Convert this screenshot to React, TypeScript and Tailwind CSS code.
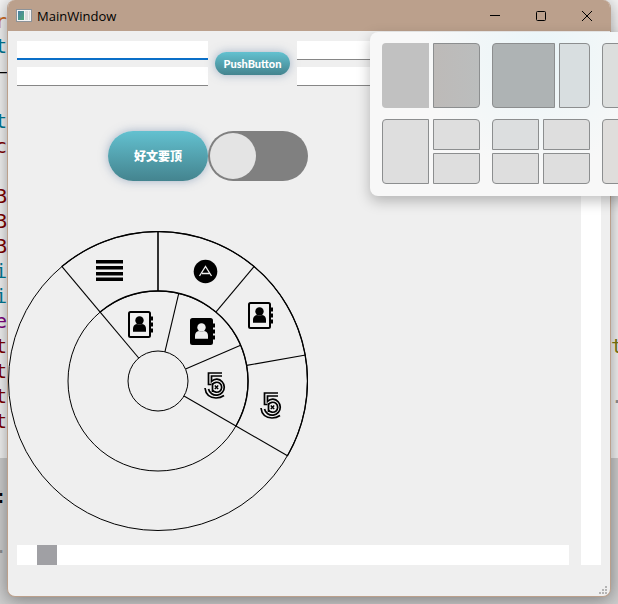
import type { ReactNode } from "react";

type CodeLine = { text: string; tone: string };

const BLANK: CodeLine = { text: "", tone: "" };
const TEAL = "text-[#007a96]";
const MAROON = "text-[#800000]";

const leftCode: CodeLine[] = [
  { text: "r", tone: "text-[#d06a20]" },
  { text: "t", tone: TEAL },
  { text: "—", tone: "text-black" },
  BLANK,
  { text: "t", tone: TEAL },
  { text: "c", tone: MAROON },
  BLANK,
  { text: "B", tone: MAROON },
  { text: "B", tone: MAROON },
  { text: "B", tone: MAROON },
  { text: "i", tone: TEAL },
  { text: "i", tone: TEAL },
  { text: "e", tone: "text-[#800080]" },
  { text: "t", tone: MAROON },
  { text: "t", tone: MAROON },
  { text: "t", tone: MAROON },
  { text: "t", tone: MAROON },
  BLANK,
  BLANK,
  { text: ":", tone: "text-black" },
  BLANK,
  { text: ".", tone: "text-[#909090]" },
];

const rightCode: CodeLine[] = [
  ...Array.from({ length: 13 }, () => BLANK),
  { text: "t", tone: "text-[#7d7a10]" },
  BLANK,
  { text: ".", tone: "text-[#909090]" },
];

function CodeStrip({ lines, align }: { lines: CodeLine[]; align: string }) {
  return (
    <div className={"flex w-[7px] flex-col overflow-hidden pt-[9px] " + align}>
      {lines.map((line, i) => (
        <span key={i} className={"h-[25px] shrink-0 text-xl leading-[25px] " + line.tone}>
          {line.text}
        </span>
      ))}
    </div>
  );
}

function Editor() {
  return (
    <div className="absolute inset-0 flex flex-col bg-[#f5f5f5]" aria-hidden="true">
      <div className="h-[458px] bg-[#f5f5f5]" />
      <div className="flex-1 bg-[#cecece]" />
      <div className="absolute inset-0 flex justify-between font-['DejaVu_Sans_Mono',monospace]">
        <CodeStrip lines={leftCode} align="items-end" />
        <CodeStrip lines={rightCode} align="items-start" />
      </div>
    </div>
  );
}

function TitleBar() {
  return (
    <header className="flex h-[31px] items-center bg-[#bba08c] pl-2">
      <svg width="16" height="13" viewBox="0 0 16 13" aria-hidden="true">
        <defs>
          <linearGradient id="pane" x1="0" y1="0" x2="1" y2="1">
            <stop offset="0" stopColor="#4a7fa5" />
            <stop offset="1" stopColor="#4fa878" />
          </linearGradient>
        </defs>
        <rect x="0.5" y="0.5" width="15" height="12" fill="#f4f4f4" stroke="#8d9399" />
        <rect x="2" y="2" width="6" height="9" fill="url(#pane)" />
        <rect x="9" y="2" width="3" height="9" fill="#dedede" />
        <rect x="13" y="2" width="1" height="9" fill="#dedede" />
      </svg>
      <h1 className="ml-[5px] flex-1 font-['Open_Sans',sans-serif] text-[13px] leading-4 text-black">MainWindow</h1>
      <button type="button" aria-label="Minimize" className="flex h-full w-[46px] items-center justify-center">
        <svg width="10" height="10" viewBox="0 0 10 10" stroke="#000" fill="none">
          <path d="M0 4.500H10" />
        </svg>
      </button>
      <button type="button" aria-label="Maximize" className="flex h-full w-[46px] items-center justify-center">
        <svg width="10" height="10" viewBox="0 0 10 10" stroke="#000" fill="none">
          <rect x="0.5" y="0.5" width="9" height="9" rx="1" />
        </svg>
      </button>
      <button type="button" aria-label="Close" className="flex h-full w-[46px] items-center justify-center">
        <svg width="10" height="10" viewBox="0 0 10 10" stroke="#000" fill="none">
          <path d="M0 0L10 10M10 0L0 10" />
        </svg>
      </button>
    </header>
  );
}

function Field({ label, active = false }: { label: string; active?: boolean }) {
  return (
    <input
      type="text"
      aria-label={label}
      className={
        "block h-[19px] w-full bg-white px-1 text-xs outline-none " +
        (active ? "border-b-2 border-[#0a6fc8]" : "border-b border-[#868686]")
      }
    />
  );
}

const pill =
  "bg-linear-to-b from-[#63c1d0] to-[#44848f] font-black text-white shadow-[0_0_10px_rgba(90,120,160,0.5)]";

function Book({ x, y, filled = false }: { x: number; y: number; filled?: boolean }) {
  const person = filled ? "#efefef" : "#000";
  return (
    <g transform={`translate(${x} ${y})`}>
      <rect x="1" y="1" width="21" height="25" rx="1.5" fill={filled ? "#000" : "none"} stroke="#000" strokeWidth="2" />
      <path d="M22 5.5h3v4h-3zM22 11.500h3v4h-3zM22 17.500h3v4h-3z" fill="#000" />
      <circle cx="11.500" cy="9.500" r="4.200" fill={person} />
      <path d="M5 20.800v-3q0-4 4-4.800q2.500 1.500 5 0q4 .8 4 4.800v3z" fill={person} />
    </g>
  );
}

function Five({ x, y }: { x: number; y: number }) {
  return (
    <g transform={`translate(${x} ${y})`} fill="none" stroke="#000" strokeWidth="1.7">
      <path d="M18 1H4.500V12.500H7.500" />
      <path d="M18 4H7.500V9.500Q10 7 13 7.200A8 8 0 1 1 4.500 17" />
      <path d="M8.500 11V20M8.500 12.500A5 5 0 1 1 8.500 18" />
      <path d="M10.800 13.500l3.400 3.400M14.200 13.500l-3.400 3.400" strokeWidth="1.4" />
      <path d="M1 16Q2 25.500 12 26Q16.500 26 20 23.500" />
    </g>
  );
}

const CENTER = 150;

function spoke(angle: number, from: number, to: number) {
  const rad = (angle * Math.PI) / 180;
  const cos = Math.cos(rad);
  const sin = -Math.sin(rad);
  return `M${CENTER + from * cos} ${CENTER + from * sin}L${CENTER + to * cos} ${CENTER + to * sin}`;
}

function RadialMenu() {
  const outer = [130, 90, 50, 10, -30];
  const inner = [130, 76.67, 23.33, -30];
  return (
    <svg width="300" height="300" viewBox="0 0 300 300" role="img" aria-label="Radial menu" className="mt-[50px] block">
      <g fill="none" stroke="#000">
        <circle cx="150" cy="150" r="149.5" />
        <circle cx="150" cy="150" r="90" />
        <circle cx="150" cy="150" r="30" />
        {outer.map((a) => (
          <path key={a} d={spoke(a, 90, 150)} strokeWidth={a === 90 ? 1.6 : 1.1} />
        ))}
        {inner.map((a) => (
          <path key={a} d={spoke(a, 30, 90)} strokeWidth="1.1" />
        ))}
        <path d="M92.150 81.060A90 90 0 0 1 227.940 195" strokeWidth="1.4" />
        <path d="M53.900 35.500A149.500 149.500 0 0 1 279.500 224.700" strokeWidth="1.3" />
      </g>
      <path d="M88 29h27v3.500H88zM88 35h27v3.500H88zM88 41h27v3.500H88zM88 46.500h27V50H88z" />
      <circle cx="197.500" cy="40.500" r="11.800" />
      <path d="M191.500 45l6-9.500l6 9.500M194 42.500h7.500" fill="none" stroke="#efefef" strokeWidth="1.3" />
      <Book x={120} y={80} />
      <Book x={182} y={87} filled />
      <Book x={240} y={71} />
      <Five x={196} y={141} />
      <Five x={252} y={161} />
    </svg>
  );
}

const zoneBase = "border border-[#8c8e8f] ";

function Zone({ label, look }: { label: string; look: string }) {
  return <button type="button" aria-label={label} className={zoneBase + look} />;
}

function Layout({ cols, children }: { cols: string; children: ReactNode }) {
  return <div className={"grid h-[65px] w-[98px] shrink-0 gap-x-1 gap-y-[3px] " + cols}>{children}</div>;
}

function SnapLayouts() {
  return (
    <aside
      aria-label="Snap layouts"
      className="absolute top-8 left-[370px] right-[-120px] flex flex-col gap-[11px] rounded-lg bg-[#f8f8f8] bg-[radial-gradient(circle_at_170px_20px,#eaf5f8_0px,#f8f8f8_120px)] px-3 pt-[11px] pb-3 shadow-[0_5px_14px_rgba(0,0,0,0.25)]"
    >
      <div className="flex gap-3">
        <Layout cols="grid-cols-2">
          <button type="button" aria-label="Left half" className="rounded-l bg-[#c1c1c1]" />
          <Zone label="Right half" look="rounded-r bg-linear-to-r from-[#bdbab8] to-[#bbbdbd]" />
        </Layout>
        <Layout cols="grid-cols-[2fr_1fr]">
          <Zone label="Left two thirds" look="rounded-l bg-[#aeb3b4]" />
          <Zone label="Right third" look="rounded-r bg-[#d8dee0]" />
        </Layout>
        <Layout cols="grid-cols-3">
          <Zone label="First third" look="rounded-l bg-[#dcdedd]" />
          <Zone label="Second third" look="bg-[#dcdedd]" />
          <Zone label="Last third" look="rounded-r bg-[#dcdedd]" />
        </Layout>
      </div>
      <div className="flex gap-3">
        <Layout cols="grid-cols-2 grid-rows-2">
          <Zone label="Left half of three" look="row-span-2 rounded-l bg-[#dedede]" />
          <Zone label="Top right" look="rounded-tr bg-[#dedede]" />
          <Zone label="Bottom right" look="rounded-br bg-[#dedede]" />
        </Layout>
        <Layout cols="grid-cols-2 grid-rows-2">
          <Zone label="Top left quarter" look="rounded-tl bg-[#dcdedf]" />
          <Zone label="Top right quarter" look="rounded-tr bg-[#dedede]" />
          <Zone label="Bottom left quarter" look="rounded-bl bg-[#dedede]" />
          <Zone label="Bottom right quarter" look="rounded-br bg-[#dedede]" />
        </Layout>
        <Layout cols="grid-cols-[1fr_2fr_1fr]">
          <Zone label="Narrow left" look="rounded-l bg-[#dfdddb]" />
          <Zone label="Wide center" look="bg-[#dedede]" />
          <Zone label="Narrow right" look="rounded-r bg-[#dedede]" />
        </Layout>
      </div>
    </aside>
  );
}

const scroller =
  "m-0 block cursor-pointer appearance-none bg-white [&::-webkit-slider-thumb]:size-5 [&::-webkit-slider-thumb]:appearance-none [&::-webkit-slider-thumb]:bg-[#a0a0a4] ";

export default function App() {
  return (
    <div className="relative min-h-screen overflow-hidden font-['Noto_Sans','Noto_Sans_CJK_SC',sans-serif]">
      <Editor />
      <main className="relative mx-[7px] mb-[7px] overflow-hidden rounded-lg border-x border-b border-[#bba08c] bg-[#efefef] shadow-[0_3px_18px_rgba(0,0,0,0.4)]">
        <TitleBar />
        <div className="flex gap-3 pt-[10px] pr-[9px] pb-[31px]">
          <div className="min-w-0 flex-1">
            <div className="flex items-center gap-[7px] pl-[9px]">
              <div className="flex w-[191px] flex-col gap-[7px]">
                <Field label="First field" active />
                <Field label="Second field" />
              </div>
              <button
                type="button"
                className={"h-[23px] w-[75px] rounded-full font-['Lato',sans-serif] text-[11px] leading-4 " + pill}
              >
                PushButton
              </button>
              <div className="flex flex-1 flex-col gap-[7px]">
                <Field label="Third field" />
                <Field label="Fourth field" />
              </div>
            </div>
            <div className="mt-[45px] flex pl-[100px]">
              <button
                type="button"
                className={"h-[50px] w-[100px] rounded-full font-['Noto_Sans_CJK_SC',sans-serif] text-xs leading-4 " + pill}
              >
                好文要顶
              </button>
              <input
                type="checkbox"
                role="switch"
                aria-label="Toggle"
                className="h-[50px] w-[100px] appearance-none rounded-full bg-[#808080] p-[2px] before:block before:size-[46px] before:rounded-full before:bg-[#e4e4e4] checked:before:ml-[50px]"
              />
            </div>
            <RadialMenu />
            <div className="mt-[14px] pl-[9px]">
              <input type="range" aria-label="Horizontal scroll" min={0} max={532} defaultValue={20} className={scroller + "h-5 w-full"} />
            </div>
          </div>
          <input
            type="range"
            aria-label="Vertical scroll"
            min={0}
            max={100}
            defaultValue={0}
            className={scroller + "w-5 self-stretch [writing-mode:vertical-lr]"}
          />
        </div>
        <svg className="absolute right-[3px] bottom-[2px]" width="8" height="8" viewBox="0 0 8 8" fill="#b4b4b4" aria-hidden="true">
          <path d="M6 0h2v2h-2zM3 3h2v2h-2zM6 3h2v2h-2zM0 6h2v2h-2zM3 6h2v2h-2zM6 6h2v2h-2z" />
        </svg>
      </main>
      <SnapLayouts />
    </div>
  );
}
